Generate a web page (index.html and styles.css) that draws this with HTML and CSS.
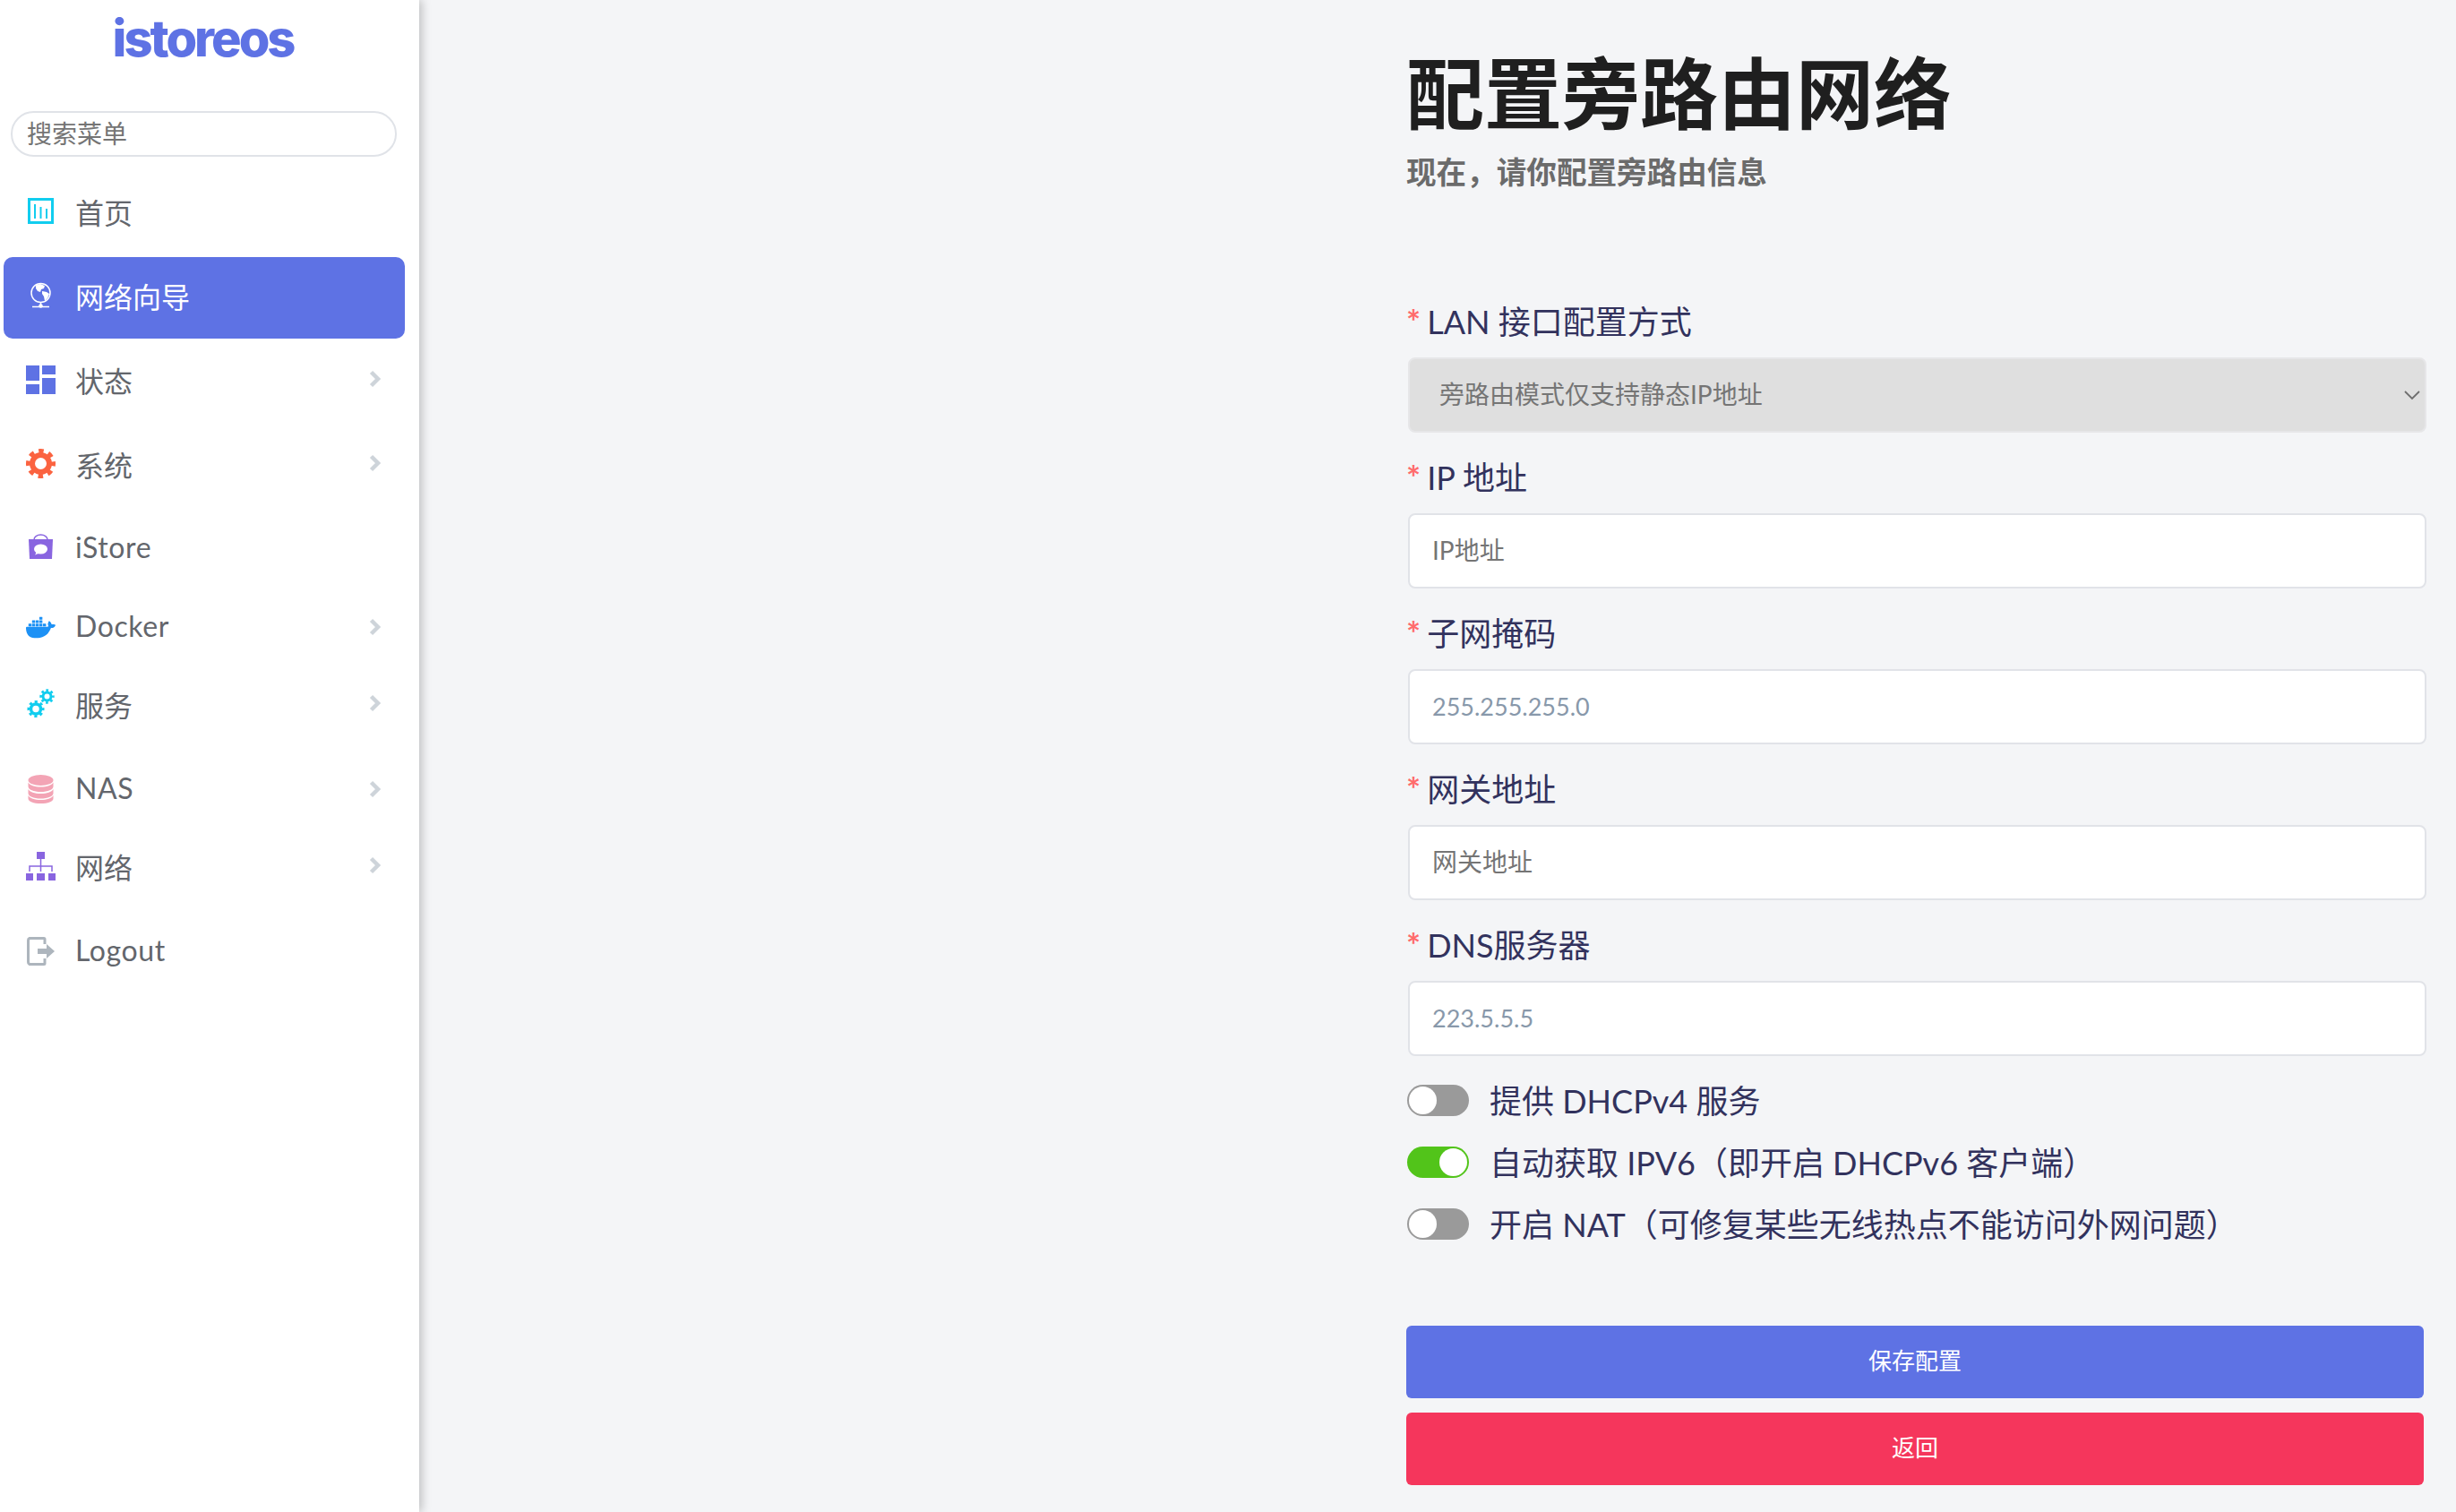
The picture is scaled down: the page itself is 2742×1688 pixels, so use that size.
FILE: index.html
```html
<!DOCTYPE html>
<html lang="zh-CN">
<head>
<meta charset="utf-8">
<title>配置旁路由网络</title>
<link rel="stylesheet" href="styles.css">
</head>
<body>
<div class="app">
  <aside class="sidebar">
    <div class="logo">istoreos</div>
    <div class="search-wrap"><input class="search" type="text" placeholder="搜索菜单"></div>
    <nav class="menu">
      <a class="item">
        <svg class="icon" width="33" height="29" viewBox="0 0 33 29"><rect x="3.500" y="1.500" width="26" height="26" fill="none" stroke="#11cdef" stroke-width="3"/><path d="M9 7h2v16H9zM15.500 10h2v13h-2zM22 12h2v11h-2z" fill="#11cdef"/></svg>
        <span class="label">首页</span>
      </a>
      <a class="item active">
        <svg class="icon" width="33" height="30" viewBox="0 0 33 30"><circle cx="16.500" cy="12" r="10.500" fill="none" stroke="#fff" stroke-width="1.500"/><path d="M11 3.500 16 2l5 2-1 3-3 1-1 3-3-1-2-3zM18 10l5 1 3 2-2 5-3 3-1-5-2-3z" fill="#fff"/><path d="M16.500 22v4M7 27.500h19" stroke="#fff" stroke-width="1.500" fill="none"/><circle cx="16.500" cy="26.500" r="2.200" fill="#fff"/></svg>
        <span class="label">网络向导</span>
      </a>
      <a class="item">
        <svg class="icon" width="33" height="32" viewBox="0 0 33 32"><path d="M0 0h15v17H0zM0 21h15v11H0zM18 0h15v10H18zM18 14h15v18H18z" fill="#5e72e4"/></svg>
        <span class="label">状态</span>
        <svg class="chevron" width="14" height="20" viewBox="0 0 14 20"><path d="M2.500 2.500 10 10l-7.500 7.500" fill="none" stroke="#ced4da" stroke-width="4.500"/></svg>
      </a>
      <a class="item">
        <svg class="icon" width="33" height="33" viewBox="0 0 33 33"><circle cx="16.500" cy="16.500" r="9.500" fill="none" stroke="#fb6340" stroke-width="6"/><circle cx="16.500" cy="16.500" r="14" fill="none" stroke="#fb6340" stroke-width="5" stroke-dasharray="5.500 5.500" stroke-dashoffset="2.750"/></svg>
        <span class="label">系统</span>
        <svg class="chevron" width="14" height="20" viewBox="0 0 14 20"><path d="M2.500 2.500 10 10l-7.500 7.500" fill="none" stroke="#ced4da" stroke-width="4.500"/></svg>
      </a>
      <a class="item item-store">
        <svg class="icon" width="33" height="28" viewBox="0 0 33 28"><path d="M9 8V6.500a7.500 5.500 0 0 1 15 0V8" fill="none" stroke="#8965e0" stroke-width="1.500"/><path d="M3 6h27l-1 22H4z" fill="#8965e0"/><ellipse cx="16.500" cy="17" rx="7.500" ry="5.500" fill="#fff"/><path d="m12 20-2 3.500 5-2z" fill="#fff"/></svg>
        <span class="label">iStore</span>
      </a>
      <a class="item latin">
        <svg class="icon" width="33" height="25" viewBox="0 3 24 18"><path fill="#1d91f5" d="M13.983 11.078h2.119a.186.186 0 00.186-.185V9.006a.186.186 0 00-.186-.186h-2.119a.185.185 0 00-.185.185v1.888c0 .102.083.185.185.185m-2.954-5.43h2.118a.186.186 0 00.186-.186V3.574a.186.186 0 00-.186-.185h-2.118a.185.185 0 00-.185.185v1.888c0 .102.082.185.185.186m0 2.716h2.118a.187.187 0 00.186-.186V6.29a.186.186 0 00-.186-.185h-2.118a.185.185 0 00-.185.185v1.887c0 .102.082.185.185.186m-2.93 0h2.12a.186.186 0 00.184-.186V6.29a.185.185 0 00-.185-.185H8.1a.185.185 0 00-.185.185v1.887c0 .102.083.185.185.186m-2.964 0h2.119a.186.186 0 00.185-.186V6.29a.185.185 0 00-.185-.185H5.136a.186.186 0 00-.186.185v1.887c0 .102.084.185.186.186m5.893 2.715h2.118a.186.186 0 00.186-.185V9.006a.186.186 0 00-.186-.186h-2.118a.185.185 0 00-.185.185v1.888c0 .102.082.185.185.185m-2.93 0h2.12a.185.185 0 00.184-.185V9.006a.185.185 0 00-.184-.186h-2.12a.185.185 0 00-.184.185v1.888c0 .102.083.185.185.185m-2.964 0h2.119a.185.185 0 00.185-.185V9.006a.185.185 0 00-.184-.186h-2.12a.186.186 0 00-.186.186v1.887c0 .102.084.185.186.185m-2.92 0h2.12a.185.185 0 00.184-.185V9.006a.185.185 0 00-.184-.186h-2.12a.185.185 0 00-.184.185v1.888c0 .102.082.185.185.185M23.763 9.89c-.065-.051-.672-.51-1.954-.51-.338.001-.676.03-1.01.087-.248-1.7-1.653-2.53-1.716-2.566l-.344-.199-.226.327c-.284.438-.49.922-.612 1.43-.23.97-.09 1.882.403 2.661-.595.332-1.55.413-1.744.42H.751a.751.751 0 00-.75.748 11.376 11.376 0 00.692 4.062c.545 1.428 1.355 2.48 2.41 3.124 1.18.723 3.1 1.137 5.275 1.137.983.003 1.963-.086 2.93-.266a12.248 12.248 0 003.823-1.389c.98-.567 1.86-1.288 2.61-2.136 1.252-1.418 1.998-2.997 2.553-4.4h.221c1.372 0 2.215-.549 2.68-1.009.309-.293.55-.65.707-1.046l.098-.288Z"/></svg>
        <span class="label">Docker</span>
        <svg class="chevron" width="14" height="20" viewBox="0 0 14 20"><path d="M2.500 2.500 10 10l-7.500 7.500" fill="none" stroke="#ced4da" stroke-width="4.500"/></svg>
      </a>
      <a class="item">
        <svg class="icon" width="33" height="33" viewBox="0 0 33 33"><g fill="none" stroke="#11cdef"><circle cx="11" cy="22.500" r="5.500" stroke-width="3.500"/><circle cx="11" cy="22.500" r="8" stroke-width="3" stroke-dasharray="3.140 3.140" stroke-dashoffset="1.570"/><circle cx="23.500" cy="8.500" r="4.500" stroke-width="3"/><circle cx="23.500" cy="8.500" r="6.800" stroke-width="2.800" stroke-dasharray="2.670 2.670" stroke-dashoffset="1.335"/></g></svg>
        <span class="label">服务</span>
        <svg class="chevron" width="14" height="20" viewBox="0 0 14 20"><path d="M2.500 2.500 10 10l-7.500 7.500" fill="none" stroke="#ced4da" stroke-width="4.500"/></svg>
      </a>
      <a class="item latin">
        <svg class="icon" width="33" height="32" viewBox="0 0 33 32"><g fill="#f3a4b5"><ellipse cx="16.500" cy="6" rx="14" ry="6"/><path d="M2.500 8.500c2 3.500 7 5 14 5s12-1.500 14-5V13c0 3.500-6 6-14 6s-14-2.500-14-6z"/><path d="M2.500 16c2 3.500 7 5 14 5s12-1.500 14-5v4.500c0 3.500-6 6-14 6s-14-2.500-14-6z"/><path d="M2.500 23c2 3.500 7 5 14 5s12-1.500 14-5v3.500c0 3.500-6 5.500-14 5.500s-14-2-14-5.500z"/></g></svg>
        <span class="label">NAS</span>
        <svg class="chevron" width="14" height="20" viewBox="0 0 14 20"><path d="M2.500 2.500 10 10l-7.500 7.500" fill="none" stroke="#ced4da" stroke-width="4.500"/></svg>
      </a>
      <a class="item">
        <svg class="icon" width="33" height="32" viewBox="0 0 33 32"><g fill="#8965e0"><path d="M12 0h9v8h-9zM0 24h8v8H0zM12 24h9v8h-9zM25 24h8v8h-8z"/></g><path d="M16.500 8v14M4 22v-6h25v6" fill="none" stroke="#8965e0" stroke-width="1.500"/></svg>
        <span class="label">网络</span>
        <svg class="chevron" width="14" height="20" viewBox="0 0 14 20"><path d="M2.500 2.500 10 10l-7.500 7.500" fill="none" stroke="#ced4da" stroke-width="4.500"/></svg>
      </a>
      <a class="item latin">
        <svg class="icon" width="33" height="32" viewBox="0 0 33 32"><path d="M21 8V2.500a1 1 0 0 0-1-1H4A2.500 2.500 0 0 0 2.500 4v24A2.500 2.500 0 0 0 4 30.500h16a1 1 0 0 0 1-1V24" fill="none" stroke="#adb5bd" stroke-width="3"/><path d="M13 13h10V8l9 8-9 8v-5H13z" fill="#adb5bd"/></svg>
        <span class="label">Logout</span>
      </a>
    </nav>
  </aside>
  <main class="main">
    <div class="panel">
      <h1 class="title">配置旁路由网络</h1>
      <p class="subtitle">现在，请你配置旁路由信息</p>
      <form class="form">
        <div class="field">
          <label class="field-label"><span class="req">*</span>LAN 接口配置方式</label>
          <div class="select-wrap">
            <select class="control select" disabled><option>旁路由模式仅支持静态IP地址</option></select>
            <svg class="select-arrow" width="18" height="11" viewBox="0 0 18 11"><path d="m1 1 8 8 8-8" fill="none" stroke="#6e6e6e" stroke-width="1.800"/></svg>
          </div>
        </div>
        <div class="field">
          <label class="field-label"><span class="req">*</span>IP 地址</label>
          <input class="control" type="text" placeholder="IP地址">
        </div>
        <div class="field">
          <label class="field-label"><span class="req">*</span>子网掩码</label>
          <input class="control control-value" type="text" value="255.255.255.0">
        </div>
        <div class="field">
          <label class="field-label"><span class="req">*</span>网关地址</label>
          <input class="control" type="text" placeholder="网关地址">
        </div>
        <div class="field">
          <label class="field-label"><span class="req">*</span>DNS服务器</label>
          <input class="control control-value" type="text" value="223.5.5.5">
        </div>
        <div class="switches">
          <div class="switch-row"><span class="switch"><span class="knob"></span></span><span class="switch-text">提供 DHCPv4 服务</span></div>
          <div class="switch-row"><span class="switch on"><span class="knob"></span></span><span class="switch-text">自动获取 IPV6（即开启 DHCPv6 客户端）</span></div>
          <div class="switch-row"><span class="switch"><span class="knob"></span></span><span class="switch-text">开启 NAT（可修复某些无线热点不能访问外网问题）</span></div>
        </div>
        <div class="actions">
          <button class="btn btn-primary" type="button">保存配置</button>
          <button class="btn btn-danger" type="button">返回</button>
        </div>
      </form>
    </div>
  </main>
</div>
</body>
</html>
```
FILE: styles.css
```css
* { box-sizing: border-box; }
html, body { margin: 0; height: 100%; }
body {
  background: #f4f5f7;
  font-family: Lato, "Noto Sans CJK SC", sans-serif;
  overflow: hidden;
}
.app { display: flex; height: 1688px; }
.sidebar {
  width: 468px;
  flex: none;
  background: #fff;
  box-shadow: 3px 0 10px rgba(0, 0, 0, .22);
}
.logo {
  height: 124px;
  padding-top: 5px;
  padding-right: 15px;
  text-align: center;
  font-family: Inter, sans-serif;
  font-size: 56px;
  line-height: 76px;
  font-weight: 800;
  letter-spacing: -3px;
  color: #5e72e4;
}
.search-wrap { padding: 0 25px 0 12px; }
.search {
  display: block;
  width: 431px;
  height: 51px;
  border: 2px solid #e0e3e8;
  border-radius: 26px;
  padding: 0 16px 2px;
  font: 28px Lato, "Noto Sans CJK SC", sans-serif;
  background: #fff;
  outline: none;
}
.search::placeholder { color: #757575; opacity: 1; }
.menu { display: flex; flex-direction: column; gap: 3px; padding: 18px 16px 0 4px; }
.item {
  display: flex;
  align-items: center;
  padding: 20px 26px 25px 25px;
  border-radius: 10px;
  color: #63666c;
  font-size: 32px;
}
.item.active { background: #5e72e4; color: #fff; }
.item.latin { padding-top: 22.5px; padding-bottom: 22.5px; }
.item-store { padding-top: 21.5px; padding-bottom: 23.5px; }
.icon { flex: none; margin-right: 22px; margin-bottom: 1px; }
.label { flex: 1; }
.chevron { flex: none; margin-bottom: 2px; }
.item.latin .icon { margin-bottom: -4px; }
.item.latin .chevron { margin-bottom: -4px; }
.item.latin .label, .item-store .label { letter-spacing: .6px; }
.item-store .icon { margin-bottom: 0; }

.main { flex: 1; display: flex; justify-content: flex-end; padding-right: 33px; }
.panel { width: 1139px; padding-top: 61px; }
.title {
  margin: 0;
  font-size: 87px;
  line-height: 88px;
  font-weight: 700;
  color: #1f1f1f;
}
.subtitle {
  margin: 21px 0 0;
  font-size: 33.6px;
  line-height: 44px;
  font-weight: 700;
  color: #6b6b6b;
}
.form { margin-top: 119px; display: flex; flex-direction: column; }
.field { display: flex; flex-direction: column; gap: 14px; margin-bottom: 24px; }
.field-label {
  display: flex;
  align-items: center;
  height: 52px;
  padding-bottom: 4px;
  font-size: 36px;
  color: #32325d;
  white-space: pre;
}
.req {
  margin: 0 7px 0 0;
  font-family: Inter, sans-serif;
  font-size: 31px;
  font-weight: 500;
  line-height: 36px;
  color: #ff6b6b;
}
.control {
  display: block;
  width: 1137px;
  height: 84px;
  margin-left: 2px;
  padding: 0 25px 2px;
  border: 2px solid #e1e3e8;
  border-radius: 8px;
  background: #fff;
  color: #8898aa;
  font: 28px Lato, "Noto Sans CJK SC", sans-serif;
  outline: none;
}
.control::placeholder { color: #757575; opacity: 1; }
.control-value { font-size: 27px; }
.select-wrap { position: relative; }
.select {
  appearance: none;
  background: #dfdfdf;
  border-color: #e6e6e8;
  color: #757575;
  opacity: 1;
  padding-left: 33px;
}
.select-arrow { position: absolute; right: 7px; top: 37px; }
.switches { display: flex; flex-direction: column; gap: 34px; margin-top: 8px; }
.switch-row { display: flex; align-items: center; height: 35px; }
.switch {
  flex: none;
  width: 69px;
  height: 35px;
  margin: 0 23px 0 1px;
  padding: 2px;
  display: flex;
  border-radius: 18px;
  background: #9a9a9a;
}
.switch.on { background: #52c41a; justify-content: flex-end; }
.knob { width: 31px; height: 31px; border-radius: 50%; background: #fff; }
.switch-text { font-size: 36px; line-height: 52px; color: #32325d; white-space: nowrap; }
.actions { display: flex; flex-direction: column; gap: 16px; margin-top: 96px; }
.btn {
  display: block;
  width: 1136px;
  height: 81px;
  padding: 0 0 6px;
  border: 0;
  border-radius: 6px;
  color: #fff;
  font: 26px Lato, "Noto Sans CJK SC", sans-serif;
}
.btn-primary { background: #5e72e4; }
.btn-danger { background: #f5365c; }
```
